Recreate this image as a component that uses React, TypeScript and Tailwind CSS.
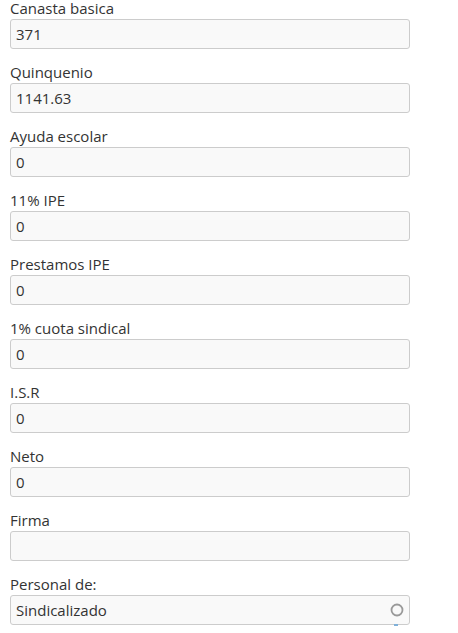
import React from 'react';

const fields = [
  { label: 'Canasta basica', value: '371' },
  { label: 'Quinquenio', value: '1141.63' },
  { label: 'Ayuda escolar', value: '0' },
  { label: '11% IPE', value: '0' },
  { label: 'Prestamos IPE', value: '0' },
  { label: '1% cuota sindical', value: '0' },
  { label: 'I.S.R', value: '0' },
  { label: 'Neto', value: '0' },
  { label: 'Firma', value: '' },
];

export default function App() {
  return (
    <div className="w-[458px] h-[633px] overflow-hidden bg-white pl-[10px] text-[#333] font-['Open_Sans',sans-serif] text-[15px]">
      {fields.map((f) => (
        <div key={f.label} className="flex flex-col h-[64px]">
          <label className="h-[19px] leading-[17px]">{f.label}</label>
          <div className="w-[400px] h-[30px] border border-[#ccc] rounded-[3px] bg-[#f9f9f9] px-[5px] flex items-center">
            {f.value}
          </div>
        </div>
      ))}
      <div className="flex flex-col">
        <label className="h-[19px] leading-[17px]">Personal de:</label>
        <div className="relative w-[400px] h-[30px] border border-[#ccc] rounded-[3px] bg-[#f9f9f9] pl-[5px] pr-[5px] flex items-center justify-between">
          <span>Sindicalizado</span>
          <svg width="14" height="14" viewBox="0 0 14 14">
            <circle cx="7" cy="7" r="5.5" fill="none" stroke="#999" strokeWidth="1.8" />
          </svg>
          <span className="absolute right-[11px] -bottom-[2px] w-[4px] h-[2px] bg-[#7fb0d8]" />
        </div>
      </div>
    </div>
  );
}
